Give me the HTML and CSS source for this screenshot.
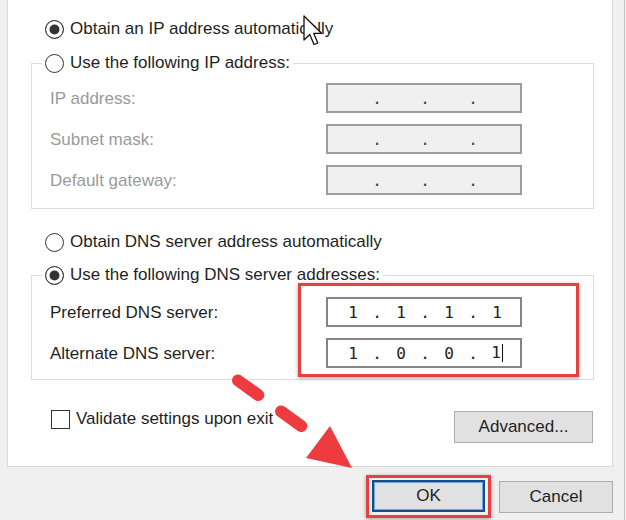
FILE: index.html
```html
<!DOCTYPE html>
<html lang="en">
<head>
    <meta charset="UTF-8">
    <meta name="viewport" content="width=device-width, initial-scale=1.0">
    <title>Internet Protocol Version 4 (TCP/IPv4) Properties</title>
    <link rel="stylesheet" href="styles.css">
</head>
<body>

<div class="dialog">
    <!-- General tab -->
    <div class="panel">
        <label class="option first-option"><span class="radio checked"></span>Obtain an IP address automatically</label>

        <fieldset class="group">
            <legend><span class="option"><span class="radio"></span>Use the following IP address:</span></legend>
            <div class="field disabled">
                <span class="field-label">IP address:</span>
                <span class="ip-box"><span></span><i>.</i><span></span><i>.</i><span></span><i>.</i><span></span></span>
            </div>
            <div class="field disabled">
                <span class="field-label">Subnet mask:</span>
                <span class="ip-box"><span></span><i>.</i><span></span><i>.</i><span></span><i>.</i><span></span></span>
            </div>
            <div class="field disabled">
                <span class="field-label">Default gateway:</span>
                <span class="ip-box"><span></span><i>.</i><span></span><i>.</i><span></span><i>.</i><span></span></span>
            </div>
        </fieldset>

        <label class="option dns-auto"><span class="radio"></span>Obtain DNS server address automatically</label>

        <fieldset class="group dns-group">
            <legend><span class="option"><span class="radio checked"></span>Use the following DNS server addresses:</span></legend>
            <div class="field">
                <span class="field-label">Preferred DNS server:</span>
                <span class="ip-box"><span>1</span><i>.</i><span>1</span><i>.</i><span>1</span><i>.</i><span>1</span></span>
            </div>
            <div class="field">
                <span class="field-label">Alternate DNS server:</span>
                <span class="ip-box"><span>1</span><i>.</i><span>0</span><i>.</i><span>0</span><i>.</i><span class="caret">1</span></span>
            </div>
        </fieldset>

        <div class="footer-row">
            <label class="check"><span class="checkbox"></span>Validate settings upon exit</label>
            <button class="btn advanced">Advanced...</button>
        </div>
    </div>

    <!-- Dialog buttons -->
    <div class="actions">
        <div class="highlight"><button class="btn default">OK</button></div>
        <button class="btn">Cancel</button>
    </div>

    <!-- Tutorial annotations -->
    <div class="mark dns-mark"></div>

    <svg class="arrow" width="626" height="520" viewBox="0 0 626 520">
        <line x1="238" y1="380.5" x2="302" y2="426.5" stroke="#ee3b3f" stroke-width="12"
              stroke-linecap="round" stroke-dasharray="25 28"/>
        <polygon points="330,426 306,458 352,468" fill="#ee3b3f"/>
    </svg>

    <svg class="cursor" width="21" height="32" viewBox="0 0 21 32">
        <path d="M1 1 L1 25 L6.8 19.5 L11 29.5 L14.8 28 L10.7 18.3 L18.5 18.3 Z"
              fill="#fff" stroke="#111" stroke-width="1.3" stroke-linejoin="round"/>
    </svg>
</div>

</body>
</html>
```

FILE: styles.css
```css
/* Reset */
* {
    margin: 0;
    padding: 0;
    box-sizing: border-box;
}

body {
    font-family: 'Liberation Sans', Arial, sans-serif;
    font-size: 17px;
    color: #1f1f1f;
    background-color: #f0f0f0;
    width: 626px;
    height: 520px;
    overflow: hidden;
}

/* Dialog frame */
.dialog {
    position: relative;
    width: 625px;
    height: 520px;
    border-right: 1px solid #c6c6c6;
}

.panel {
    margin-left: 7px;
    width: 606px;
    background: #fff;
    border: 1px solid #dadada;
    border-top: none;
    padding: 17px 18px 23px 23px;
}

/* Radio options */
.option {
    display: flex;
    align-items: center;
    gap: 6px;
    height: 24px;
    white-space: nowrap;
}

.first-option {
    padding-left: 14px;
}

.radio {
    width: 19px;
    height: 19px;
    border: 1.5px solid #333;
    border-radius: 50%;
    background: #fff;
    flex-shrink: 0;
}

.radio.checked {
    background: #333;
    box-shadow: inset 0 0 0 3.5px #fff;
}

/* Group boxes */
.group {
    border: 1px solid #dcdcdc;
    margin-top: 10px;
    padding: 8px 0 13px 0;
}

.group legend {
    margin-left: 10px;
    padding: 0 3px;
    background: #fff;
}

.dns-auto {
    margin-top: 21px;
    padding-left: 14px;
}

.dns-group {
    margin-top: 9px;
    padding: 10px 0 11px 0;
}

.field {
    display: flex;
    align-items: center;
    height: 30px;
    padding-left: 18px;
}

.field + .field {
    margin-top: 11px;
}

.field-label {
    width: 276px;
    padding-top: 2px;
}

.field.disabled .field-label {
    color: #9a9a9a;
}

/* IP address control */
.ip-box {
    display: grid;
    grid-template-columns: repeat(7, 24px);
    align-items: center;
    justify-items: center;
    width: 196px;
    height: 30px;
    padding-left: 13px;
    border: 2px solid #858585;
    background: #fff;
    font-family: 'DejaVu Sans Mono', 'Liberation Mono', monospace;
    font-size: 16px;
    color: #222;
}

.ip-box i {
    font-style: normal;
}

.field.disabled .ip-box {
    background: #f0f0f0;
    border-color: #9c9c9c;
    color: #444;
}

.caret {
    border-right: 1.5px solid #111;
    padding-right: 1px;
    line-height: 18px;
}

/* Bottom of the tab */
.footer-row {
    display: flex;
    justify-content: space-between;
    align-items: flex-start;
    padding: 27px 0 0 20px;
}

.check {
    display: flex;
    align-items: center;
    gap: 6px;
    height: 24px;
}

.checkbox {
    width: 19px;
    height: 19px;
    border: 1.5px solid #333;
    background: #fff;
}

/* Buttons */
.btn {
    font-family: inherit;
    font-size: 17px;
    color: #1f1f1f;
    background: #e1e1e1;
    border: 1px solid #adadad;
    height: 32px;
    width: 114px;
}

.advanced {
    width: 139px;
    margin-top: 4px;
    margin-right: 1px;
}

.actions {
    display: flex;
    justify-content: flex-end;
    align-items: flex-start;
    gap: 8px;
    padding: 8px 11px 0 0;
}

.actions > .btn {
    margin-top: 6px;
}

.highlight {
    border: 3px solid #e6403f;
    padding: 2px 3px 3px 3px;
    box-shadow: 0 1px 4px rgba(0, 0, 0, 0.35);
}

.btn.default {
    width: 113px;
    border: 2px solid #1b4a86;
    box-shadow: inset 0 0 0 1px #6aa8e6;
}

/* Annotations drawn over the dialog */
.mark {
    position: absolute;
    border: 3px solid #e6403f;
    box-shadow: 0 1px 4px rgba(0, 0, 0, 0.35);
}

.dns-mark {
    left: 298px;
    top: 283px;
    width: 281px;
    height: 94px;
}

.arrow {
    position: absolute;
    left: 0;
    top: 0;
    pointer-events: none;
}

.cursor {
    position: absolute;
    left: 303px;
    top: 15px;
}
```
